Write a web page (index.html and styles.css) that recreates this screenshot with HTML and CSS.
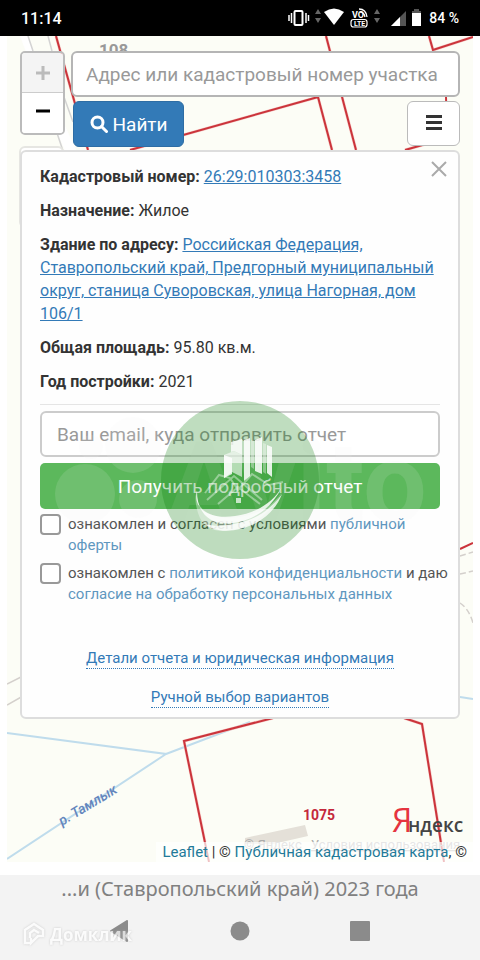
FILE: index.html
```html
<!DOCTYPE html>
<html lang="ru">
<head>
    <meta charset="UTF-8">
    <meta name="viewport" content="width=device-width, initial-scale=1.0">
    <title>Публичная кадастровая карта</title>
    <link rel="stylesheet" href="styles.css">
</head>
<body>
    <header class="status">
        <span class="time">11:14</span>
        <svg class="status-icons" width="136" height="24" viewBox="287 6 136 24" aria-hidden="true">
            <g fill="none" stroke="#fff">
                <rect x="294.500" y="11" width="8" height="14" rx="1" stroke-width="2"/>
                <path d="M289 15v6M291.500 13v10M306 13v10M308.500 15v6" stroke-width="1.500"/>
                <rect x="351" y="19.500" width="16" height="7.500" rx="2.500" stroke-width="1.200"/>
                <path d="M359 9q7 0 8 8M360 12q4 0 5 5" stroke-width="1.300"/>
            </g>
            <path d="M318 9l3 5h-6zM318 23l3-5h-6zM377 9l3 5h-6zM377 23l3-5h-6z" fill="#666"/>
            <path d="M324 12q10-7 20 0L334 25z" fill="#fff"/>
            <text class="volte" x="352" y="18">VO</text>
            <text class="lte" x="354" y="26">LTE</text>
            <path d="M391 26l15-15v15z" fill="#555"/>
            <path d="M391 26l9-9v9z" fill="#fff"/>
            <path d="M412 11h9v15h-9zM414 9h5v2h-5z" fill="#fff"/>
            <path d="M412 11h9v2h-9zM414 9h5v2h-5z" fill="#555"/>
        </svg>
        <span class="battery">84 %</span>
    </header>

    <main class="map">
        <svg class="tiles" viewBox="7 36 466 826" preserveAspectRatio="xMidYMid slice" aria-hidden="true">
            <rect x="7" y="36" width="466" height="826" fill="#fcfdf6"/>
            <path d="M28 36l10 32 42 90h-12L48 110 20 36z" fill="#fff"/>
            <path d="M28 36l5 15M48 36l4 15M64 97l9 25M57 133l6 18" fill="none" stroke="#d3d3d3" stroke-width="1.500"/>
            <rect x="20" y="147" width="43" height="80" rx="5" fill="#fff" stroke="#e6e6e2" stroke-width="2"/>
            <text class="plot-grey" x="99" y="56">108</text>
            <!-- river -->
            <g fill="none" stroke="#bfdcec" stroke-width="2">
                <path d="M7 733l159 21L7 859M166 754l84-32M460 697l13 2"/>
            </g>
            <!-- roads -->
            <g fill="none" stroke="#d4d0cc" stroke-width="1.500">
                <path d="M7 684l16-8M7 705l16-9"/>
                <path d="M460 574l13-3M460 603q9 6 13 20M460 556l13-4" stroke-dasharray="6 3"/>
            </g>
            <path d="M245 838l60-13 3 11-35 8h-28z" fill="#e4e0d8"/>
            <!-- plot borders -->
            <g fill="none" stroke="#f6cfcb" stroke-width="3">
                <path d="M56 36l32 114M130 150l188-53 14 53M326 36l30 114M429 36l4 14 40-13M405 150l42-12M273 718l-89 23 21 101M404 718l18 6 19 118"/>
            </g>
            <g fill="none" stroke="#cb343b" stroke-width="2">
                <path d="M56 36l32 114M130 150l188-53 14 53M326 36l30 114M429 36l4 14 40-13M405 150l42-12-1-42M460 549l13-6"/>
                <path d="M273 718l-89 23 25 121M404 718l18 6 22 138"/>
            </g>
            <text class="river" transform="translate(62 826) rotate(-31)">р. Тамлык</text>
            <text class="plot-red" x="303" y="820">1075</text>
            <text class="yandex-first" x="392" y="832">Я</text>
            <text class="yandex" x="408" y="832">ндекс</text>
            <text class="terms" x="244" y="849">© Яндекс</text>
            <text class="terms terms-link" x="311" y="849">Условия использования</text>
        </svg>

        <div class="tools">
            <div class="zoom">
                <button class="zoom-in" aria-label="Приблизить" disabled>
                    <svg width="16" height="16" viewBox="0 0 16 16"><path d="M8 1v14M1 8h14" stroke="#bbb" stroke-width="3"/></svg>
                </button>
                <button aria-label="Отдалить">
                    <svg width="16" height="16" viewBox="0 0 16 16"><path d="M1 6h14" stroke="#000" stroke-width="3"/></svg>
                </button>
            </div>
            <form class="search">
                <input class="field" type="text" aria-label="Поиск" placeholder="Адрес или кадастровый номер участка">
                <div class="search-row">
                    <button class="find" type="button">
                        <svg width="18" height="18" viewBox="0 0 18 18" aria-hidden="true"><circle cx="7.500" cy="7.500" r="5.500" fill="none" stroke="#fff" stroke-width="3"/><path d="M11.500 11.500l5 5" stroke="#fff" stroke-width="3" stroke-linecap="round"/></svg>
                        Найти
                    </button>
                    <button class="menu" type="button" aria-label="Меню">
                        <svg width="16" height="18" viewBox="0 0 16 18"><path d="M0 1.500h16M0 7.500h16M0 13.500h16" stroke="#333" stroke-width="3"/></svg>
                    </button>
                </div>
            </form>
        </div>

        <section class="card">
            <button class="close" aria-label="Закрыть">
                <svg width="16" height="16" viewBox="0 0 16 16"><path d="M1 1l14 14M15 1L1 15" stroke="#aaa" stroke-width="2"/></svg>
            </button>
            <p><b>Кадастровый номер:</b> <a href="#">26:29:010303:3458</a></p>
            <p><b>Назначение:</b> Жилое</p>
            <p><b>Здание по адресу:</b> <a href="#">Российская Федерация, Ставропольский край, Предгорный муниципальный округ, станица Суворовская, улица Нагорная, дом 106/1</a></p>
            <p><b>Общая площадь:</b> 95.80 кв.м.</p>
            <p><b>Год постройки:</b> 2021</p>
            <form class="report">
                <input class="field" type="email" aria-label="Email" placeholder="Ваш email, куда отправить отчет">
                <button class="submit" type="button">Получить подробный отчет</button>
                <div class="agree">
                    <input type="checkbox" id="offer">
                    <label for="offer">ознакомлен и согласен с условиями <a href="#">публичной оферты</a></label>
                </div>
                <div class="agree">
                    <input type="checkbox" id="policy">
                    <label for="policy">ознакомлен с <a href="#">политикой конфиденциальности</a> и даю <a href="#">согласие на обработку персональных данных</a></label>
                </div>
            </form>
            <nav class="more">
                <a href="#">Детали отчета и юридическая информация</a>
                <a href="#">Ручной выбор вариантов</a>
            </nav>
            <svg class="stamp" width="400" height="160" viewBox="40 400 400 160" aria-hidden="true">
                <g fill="#eee" fill-opacity=".13">
                    <circle cx="85" cy="494" r="30"/>
                    <circle cx="91" cy="447" r="12"/>
                    <circle cx="133" cy="445" r="28"/>
                    <circle cx="138" cy="499" r="19"/>
                    <text class="brand" x="166" y="522">Avito</text>
                </g>
                <circle cx="240" cy="480" r="79" fill="#007800" fill-opacity=".25"/>
                <g fill="#fff">
                    <path d="M224 455l10-4 8 4v22l-10-5-8 6z" fill-opacity=".6"/>
                    <path d="M224 455l8 3v16l-8 4zM231 442l11-3v16l-8-4-3 1z" fill-opacity=".8"/>
                    <path d="M244 440l6-2v38l-6 5zM255 440l7-3v37l-7-3zM267 445l5 2v30l-5-4z" fill-opacity=".85"/>
                    <path d="M251 440l3 1v28l-3-2zM263 443l3 1v30l-3-2z" fill-opacity=".35"/>
                    <path d="M197 490c-4 20 17 31 42 27 22-3 36-13 44-27-13 25-32 38-57 41-14 1-24-5-28-18-2-8-4-14-1-23z" fill-opacity=".35"/>
                    <path d="M197 491c-5 18 14 29 38 25 22-3 38-14 47-29-11 22-28 33-49 36-22 3-36-9-36-32z" fill-opacity=".85"/>
                    <path d="M205 524c12 11 36 7 51-1 13-7 22-18 26-29-12 16-27 26-44 29-13 3-22 4-33 1z" fill-opacity=".8"/>
                    <path d="M236 498h5v5h-5z" fill-opacity=".7"/>
                </g>
                <path d="M205 493l14-18 11 3 8 12 14-16 17 11 14-3M218 504l20-17 22 17M207 500l27-24 28 24" fill="none" stroke="#fff" stroke-opacity=".4" stroke-width="2"/>
            </svg>
        </section>

        <div class="attribution"><a href="#">Leaflet</a> | © <a href="#">Публичная кадастровая карта</a>, ©</div>
    </main>

    <footer class="bottom">
        <div class="caption">...и (Ставропольский край) 2023 года</div>
        <div class="keys">
            <svg width="20" height="22" viewBox="0 0 20 22" aria-hidden="true"><path d="M17 1v20L1 11z" fill="#8b8b8b" stroke="#8b8b8b" stroke-width="2" stroke-linejoin="round"/></svg>
            <svg width="20" height="20" viewBox="0 0 20 20" aria-hidden="true"><circle cx="10" cy="10" r="9.500" fill="#8b8b8b"/></svg>
            <svg width="20" height="20" viewBox="0 0 20 20" aria-hidden="true"><rect width="20" height="20" rx="1" fill="#8b8b8b"/></svg>
            <div class="domclick">
                <svg width="24" height="24" viewBox="0 0 24 24" aria-hidden="true"><path d="M9 21H3V8l9-6 9 6v6h-5l-7 7v-5M8 16v-5l4-3 5 3" fill="none" stroke="#fff" stroke-width="2.500"/></svg>
                Домклик
            </div>
        </div>
    </footer>
</body>
</html>
```
FILE: styles.css
```css
* {
    box-sizing: border-box;
}
body {
    margin: 0;
    min-height: 100vh;
    display: flex;
    flex-direction: column;
    background: #fff;
    color: #333;
    font-family: Roboto, "Liberation Sans", sans-serif;
    font-size: 16px;
    line-height: 23px;
}
button, input {
    font-family: inherit;
    margin: 0;
}
button {
    display: flex;
    align-items: center;
    justify-content: center;
    padding: 0;
}
a {
    color: #337ab7;
}

/* status bar */
.status {
    height: 36px;
    padding: 0 21px;
    display: flex;
    align-items: center;
    background: #000;
    color: #fff;
    font-weight: 500;
}
.time {
    margin-right: auto;
}
.battery {
    margin-left: 6px;
    font-size: 14px;
}
.volte, .lte {
    fill: #fff;
    font-size: 9px;
    font-weight: bold;
}
.lte {
    font-size: 7px;
}

/* map */
.map {
    position: relative;
    flex: 1;
    margin: 0 7px 13px;
    padding-top: 15px;
    display: flex;
    flex-direction: column;
}
.tiles {
    position: absolute;
    inset: 0;
    width: 100%;
    height: 100%;
    z-index: -1;
}
.plot-grey, .plot-red {
    font-size: 17px;
    font-weight: bold;
    fill: #999;
}
.plot-red {
    font-size: 14px;
    fill: #c4283c;
}
.river {
    font-size: 14px;
    font-style: italic;
    font-weight: 500;
    fill: #6486bd;
}
.yandex, .yandex-first {
    font-family: "Open Sans", sans-serif;
    font-size: 19px;
    font-weight: 600;
    fill: #444;
}
.yandex-first {
    font-size: 32px;
    font-weight: 400;
    fill: #e5343f;
}
.terms {
    font-size: 13px;
    fill: #aaa;
}
.terms-link {
    text-decoration: underline;
}
.tools {
    display: flex;
    align-items: flex-start;
    gap: 6px;
    padding: 0 13px;
}
.zoom {
    width: 45px;
    border: 2px solid #bbb;
    border-radius: 5px;
    overflow: hidden;
}
.zoom button {
    width: 100%;
    height: 40px;
    border: 0;
    background: #fff;
}
.zoom .zoom-in {
    background: #f4f4f4;
    border-bottom: 1px solid #ccc;
}
.search {
    flex: 1;
}
.field {
    display: block;
    width: 100%;
    height: 46px;
    padding: 0 13px;
    border: 2px solid #b5b5b5;
    border-radius: 6px;
    background: #fff;
    font-size: 19px;
}
.field::placeholder {
    color: #999;
}
.search-row {
    display: flex;
    justify-content: space-between;
    padding: 4px 0 3px 2px;
}
.find {
    width: 111px;
    height: 46px;
    gap: 5px;
    border: 1px solid #2e6da4;
    border-radius: 6px;
    background: #337ab7;
    color: #fff;
    font-size: 19px;
}
.menu {
    width: 53px;
    height: 45px;
    border: 1px solid #bbb;
    border-radius: 6px;
    background: #fff;
}

/* object card */
.card {
    position: relative;
    margin: 0 13px;
    padding: 13px 18px 9px;
    border: 2px solid #ddd;
    border-radius: 6px;
    background: #fefefe;
}
.card p {
    margin: 0 0 11px;
}
.close {
    position: absolute;
    top: 7px;
    right: 9px;
    width: 20px;
    height: 20px;
    border: 0;
    background: none;
}
.report {
    padding-top: 6px;
    border-top: 1px solid #e5e5e5;
}
.report .field {
    border-color: #ccc;
    padding: 0 15px;
}
.submit {
    width: 100%;
    height: 46px;
    margin: 6px 0 5px;
    border: 0;
    border-radius: 5px;
    background: #5cb85c;
    color: #fff;
    font-size: 19px;
}
.agree {
    display: flex;
    gap: 7px;
    margin: 0 -12px 7px 0;
    font-size: 15px;
    line-height: 21px;
    color: #555;
}
.agree input {
    appearance: none;
    flex: none;
    width: 21px;
    height: 21px;
    border: 2px solid #999;
    border-radius: 4px;
    background: #fff;
}
.agree a {
    color: #5f97bf;
    text-decoration: none;
}
.more {
    display: flex;
    flex-direction: column;
    align-items: center;
    gap: 18px;
    padding-top: 36px;
    font-size: 15px;
    line-height: 20px;
}
.more a {
    text-decoration: none;
    border-bottom: 1px dotted #337ab7;
}
.stamp {
    position: absolute;
    top: 248px;
    left: 50%;
    transform: translateX(-50%);
    pointer-events: none;
}
.brand {
    font-size: 113px;
    font-weight: bold;
}
.attribution {
    align-self: flex-end;
    margin-top: auto;
    padding: 0 6px;
    background: rgba(255, 255, 255, .7);
    font-size: 15px;
    line-height: 20px;
}
.attribution a {
    color: #1f7a99;
    text-decoration: none;
}

/* bottom of the screen */
.bottom {
    padding-bottom: 10px;
    background: #f3f3f3;
}
.caption {
    font-family: "Noto Sans", sans-serif;
    font-size: 20px;
    line-height: 28px;
    color: #808080;
    text-align: center;
}
.keys {
    position: relative;
    height: 47px;
    padding: 8px 110px 0;
    display: flex;
    align-items: center;
    justify-content: space-between;
}
.domclick {
    position: absolute;
    left: 22px;
    top: 19px;
    display: flex;
    align-items: center;
    gap: 4px;
    color: #fff;
    font-family: "Open Sans", sans-serif;
    font-size: 17px;
    font-weight: bold;
    opacity: .7;
    filter: drop-shadow(0 0 1px #bbb);
}
```
